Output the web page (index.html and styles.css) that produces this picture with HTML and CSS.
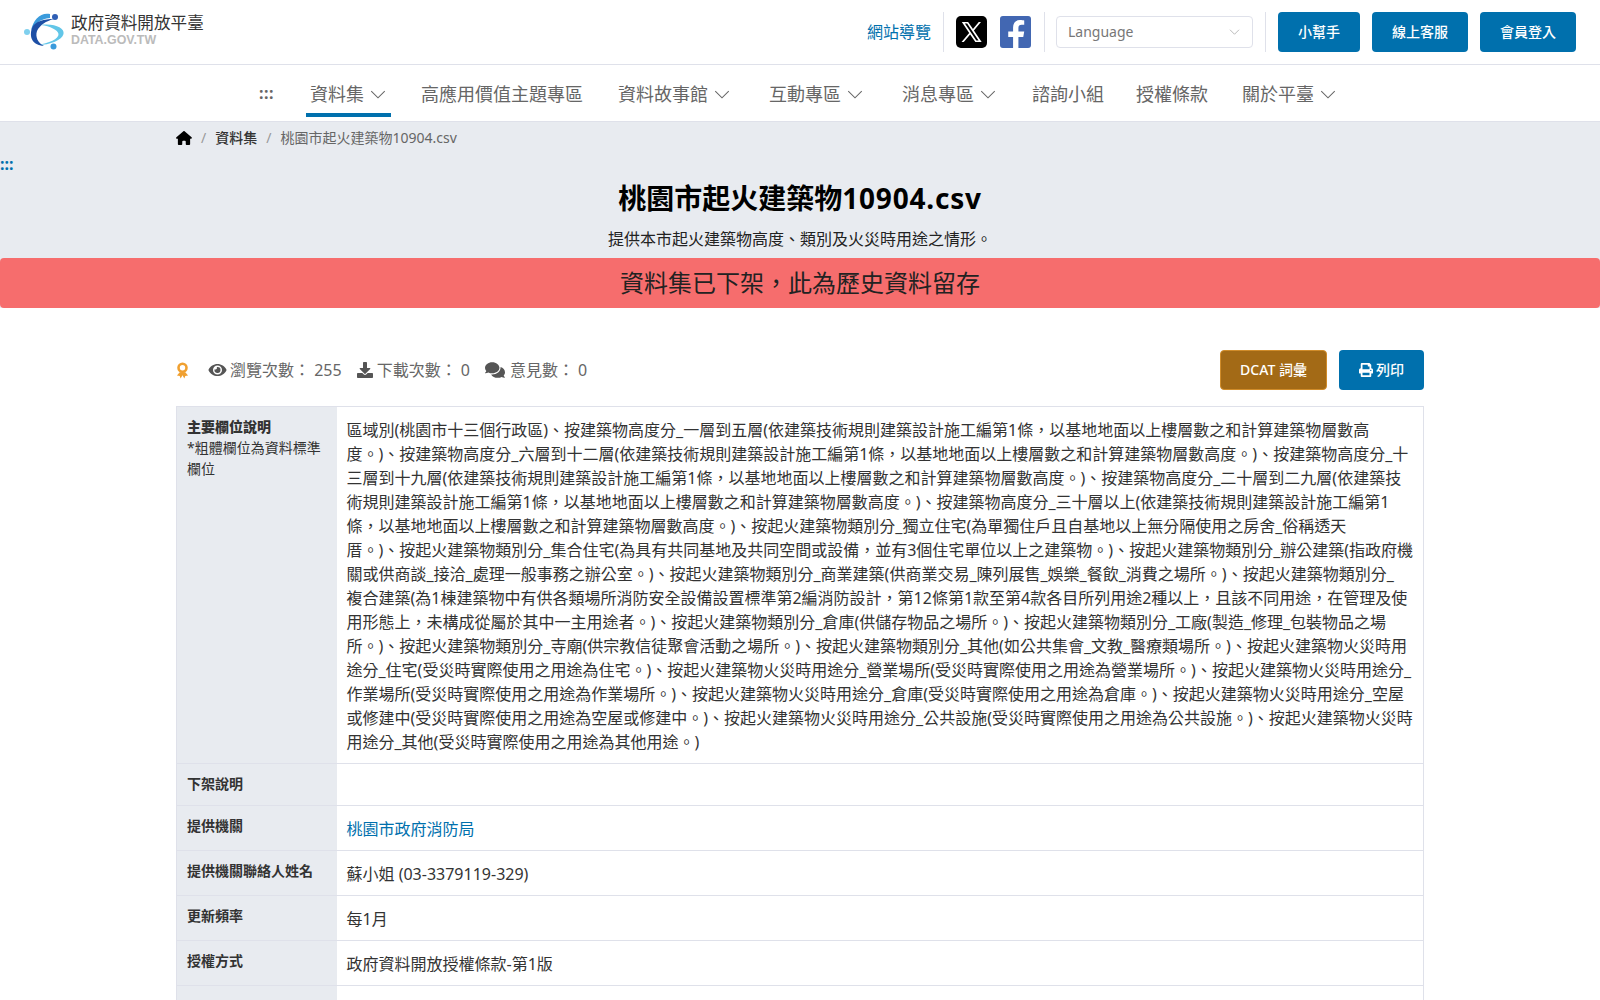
FILE: index.html
```html
<!DOCTYPE html>
<html lang="zh-Hant">

<head>
    <meta charset="UTF-8" />
    <meta name="viewport" content="width=device-width, initial-scale=1.0" />
    <title>桃園市起火建築物10904.csv</title>
    <link rel="stylesheet" href="styles.css">
</head>

<body>
    <!-- Top bar -->
    <header class="topbar">
        <a class="logo">
            <svg class="logo-mark" viewBox="24 12 44 40" aria-hidden="true">
                <path d="M41 25C54 23 65 28 63.500 34 62 40 51 45 37 45 49 43 59 39 58.500 34 58 30 50 26 41 25z" fill="#62c6e8" />
                <path d="M50 14C41 12 33 19 31 31 34 24 40 19 50 18z" fill="#3a9bdc" />
                <path d="M32 28C29 37 32 45 44 46 38 43 35 37 37 31 40 25 46 21 54 19 44 19 35 21 32 28z" fill="#1d4fa5" />
                <circle cx="55" cy="17" r="3" fill="#2f5fb5" />
                <circle cx="27" cy="32" r="3" fill="#7fd0ee" />
                <circle cx="53.500" cy="46.500" r="3" fill="#3a9bdc" />
            </svg>
            <span class="logo-text">
                <span class="logo-name">政府資料開放平臺</span>
                <span class="logo-url">DATA.GOV.TW</span>
            </span>
        </a>
        <div class="topbar-right">
            <a class="sitemap">網站導覽</a>
            <div class="social">
                <svg class="social-icon" viewBox="0 0 32 32" preserveAspectRatio="none" aria-label="X">
                    <rect width="32" height="32" rx="5" fill="#000" />
                    <path d="M6 6h6.500l5 7 6-7h2.300l-7.300 8.400L26.500 26H20l-5.400-7.600L8 26H5.700l7.900-9.100zm3.200 1.600L21 24.400h2.300L11.500 7.600z" fill="#fff" />
                </svg>
                <svg class="social-icon" viewBox="0 0 32 32" preserveAspectRatio="none" aria-label="Facebook">
                    <rect width="32" height="32" rx="3" fill="#4267b2" />
                    <path d="M19 32V21h5l1-5.500h-6V12c0-2 1-3.200 3.400-3.200H25V4.500C24 4.300 22.500 4 20.500 4 16 4 13.500 7 13.500 11.500v4h-5V21h5v11z" fill="#fff" />
                </svg>
            </div>
            <div class="lang-wrap">
                <div class="lang-select">
                    <span>Language</span>
                    <svg class="chevron chevron-sm" viewBox="0 0 14 8"><path d="M1 1l6 6 6-6" /></svg>
                </div>
            </div>
            <div class="top-buttons">
                <a class="btn btn-help">小幫手</a>
                <a class="btn">線上客服</a>
                <a class="btn">會員登入</a>
            </div>
        </div>
    </header>

    <!-- Main nav -->
    <nav class="mainnav">
        <a class="nav-anchor">:::</a>
        <a class="nav-item active">資料集<svg class="chevron" viewBox="0 0 14 8"><path d="M1 1l6 6 6-6" /></svg></a>
        <a class="nav-item">高應用價值主題專區</a>
        <a class="nav-item">資料故事館<svg class="chevron" viewBox="0 0 14 8"><path d="M1 1l6 6 6-6" /></svg></a>
        <a class="nav-item">互動專區<svg class="chevron" viewBox="0 0 14 8"><path d="M1 1l6 6 6-6" /></svg></a>
        <a class="nav-item">消息專區<svg class="chevron" viewBox="0 0 14 8"><path d="M1 1l6 6 6-6" /></svg></a>
        <a class="nav-item">諮詢小組</a>
        <a class="nav-item">授權條款</a>
        <a class="nav-item">關於平臺<svg class="chevron" viewBox="0 0 14 8"><path d="M1 1l6 6 6-6" /></svg></a>
    </nav>

    <!-- Page heading -->
    <section class="page-head">
        <div class="breadcrumb">
            <svg class="home-icon" viewBox="0 0 576 512"><path d="M575.800 255.500c0 18-15 32.100-32 32.100h-32l.7 160.200c0 2.700-.2 5.400-.5 8.100V472c0 22.100-17.900 40-40 40H456c-1.100 0-2.200 0-3.300-.1-1.400.1-2.800.1-4.200.1H392c-22.100 0-40-17.900-40-40v-88c0-17.700-14.300-32-32-32h-64c-17.700 0-32 14.300-32 32v88c0 22.100-17.900 40-40 40h-55.900c-1.500 0-3-.1-4.500-.2-1.200.1-2.400.2-3.600.2H104c-22.100 0-40-17.900-40-40V360c0-.9 0-1.900.1-2.800v-69.600H32c-18 0-32-14-32-32.100 0-9 3-17 10-24L266.400 8c7-7 15-8 22-8s15 2 21 7l255.400 224.500c8 7 12 15 11 24z" /></svg>
            <span class="crumb-sep">/</span>
            <a class="crumb-link">資料集</a>
            <span class="crumb-sep">/</span>
            <span class="crumb-current">桃園市起火建築物10904.csv</span>
        </div>
        <a class="content-anchor">:::</a>
        <h1>桃園市起火建築物<span class="title-ext">10904.csv</span></h1>
        <p class="lead">提供本市起火建築物高度、類別及火災時用途之情形。</p>
        <div class="offline-banner">資料集已下架，此為歷史資料留存</div>
    </section>

    <main class="container">
        <div class="stats-row">
            <div class="stats">
                <svg class="icon-award" viewBox="0 0 14 18">
                    <circle cx="7" cy="6" r="4.300" fill="none" stroke="#f0a030" stroke-width="2.800" />
                    <path d="M1 14.500l3 .5 1 2.500 2-3.500 2 3.500 1-2.500 3-.5-3-3.500H4z" fill="#f0a030" />
                </svg>
                <span class="stat">
                    <svg class="icon icon-eye" viewBox="0 0 576 512"><path d="M572.52 241.4C518.29 135.59 410.93 64 288 64S57.68 135.64 3.48 241.41a32.35 32.35 0 0 0 0 29.19C57.71 376.41 165.07 448 288 448s230.32-71.64 284.52-177.41a32.35 32.35 0 0 0 0-29.19zM288 400a144 144 0 1 1 144-144 143.93 143.93 0 0 1-144 144zm0-240a95.31 95.31 0 0 0-25.31 3.79 47.85 47.85 0 0 1-66.9 66.9A95.78 95.78 0 1 0 288 160z" /></svg>
                    <span>瀏覽次數： 255</span>
                </span>
                <span class="stat">
                    <svg class="icon" viewBox="0 0 512 512"><path d="M216 0h80c13.300 0 24 10.700 24 24v168h87.700c17.800 0 26.700 21.500 14.100 34.100L269.700 378.300c-7.500 7.500-19.800 7.500-27.300 0L90.100 226.100c-12.600-12.600-3.700-34.100 14.100-34.100H192V24c0-13.300 10.700-24 24-24zm296 376v112c0 13.300-10.700 24-24 24H24c-13.300 0-24-10.700-24-24V376c0-13.300 10.700-24 24-24h146.700l49 49c20.100 20.100 52.500 20.100 72.600 0l49-49H488c13.300 0 24 10.700 24 24z" /></svg>
                    <span>下載次數： 0</span>
                </span>
                <span class="stat">
                    <svg class="icon icon-comments" viewBox="0 0 576 512"><path d="M416 192c0-88.400-93.100-160-208-160S0 103.600 0 192c0 34.300 14.100 65.900 38 92-13.400 30.200-35.500 54.200-35.800 54.500-2.200 2.300-2.800 5.700-1.500 8.700S4.800 352 8 352c36.600 0 66.900-12.300 88.700-25 32.200 15.700 70.300 25 111.300 25 114.900 0 208-71.600 208-160zm122 220c23.900-26 38-57.700 38-92 0-66.900-53.500-124.200-129.300-148.100.9 6.600 1.300 13.300 1.300 20.100 0 105.900-107.700 192-240 192-10.800 0-21.300-.8-31.700-1.900C207.800 439.600 281.800 480 368 480c41 0 79.100-9.200 111.300-25 21.800 12.700 52.100 25 88.700 25 3.200 0 6.100-1.900 7.300-4.800 1.300-2.900.7-6.300-1.500-8.700-.3-.3-22.400-24.200-35.800-54.500z" /></svg>
                    <span>意見數： 0</span>
                </span>
            </div>
            <div class="actions">
                <a class="btn btn-dcat">DCAT 詞彙</a>
                <a class="btn btn-print">
                    <svg class="icon-print" viewBox="0 0 512 512"><path d="M448 192V77.250c0-8.490-3.370-16.620-9.370-22.630L393.370 9.370c-6-6-14.140-9.370-22.630-9.370H96C78.330 0 64 14.330 64 32v160c-35.350 0-64 28.650-64 64v112c0 8.840 7.160 16 16 16h48v96c0 17.670 14.330 32 32 32h320c17.670 0 32-14.330 32-32v-96h48c8.840 0 16-7.160 16-16V256c0-35.350-28.650-64-64-64zm-64 256H128v-96h256v96zm0-224H128V64h192v48c0 8.840 7.160 16 16 16h48v96zm48 72c-13.250 0-24-10.750-24-24 0-13.260 10.750-24 24-24s24 10.740 24 24c0 13.250-10.750 24-24 24z" /></svg>列印
                </a>
            </div>
        </div>

        <table class="detail-table">
            <tr>
                <th><strong>主要欄位說明</strong><span class="th-note">*粗體欄位為資料標準欄位</span></th>
                <td>區域別(桃園市十三個行政區)、按建築物高度分_一層到五層(依建築技術規則建築設計施工編第1條，以基地地面以上樓層數之和計算建築物層數高度。)、按建築物高度分_六層到十二層(依建築技術規則建築設計施工編第1條，以基地地面以上樓層數之和計算建築物層數高度。)、按建築物高度分_十三層到十九層(依建築技術規則建築設計施工編第1條，以基地地面以上樓層數之和計算建築物層數高度。)、按建築物高度分_二十層到二九層(依建築技術規則建築設計施工編第1條，以基地地面以上樓層數之和計算建築物層數高度。)、按建築物高度分_三十層以上(依建築技術規則建築設計施工編第1條，以基地地面以上樓層數之和計算建築物層數高度。)、按起火建築物類別分_獨立住宅(為單獨住戶且自基地以上無分隔使用之房舍_俗稱透天<br>厝。)、按起火建築物類別分_集合住宅(為具有共同基地及共同空間或設備，並有3個住宅單位以上之建築物。)、按起火建築物類別分_辦公建築(指政府機<br>關或供商談_接洽_處理一般事務之辦公室。)、按起火建築物類別分_商業建築(供商業交易_陳列展售_娛樂_餐飲_消費之場所。)、按起火建築物類別分_<br>複合建築(為1棟建築物中有供各類場所消防安全設備設置標準第2編消防設計，第12條第1款至第4款各目所列用途2種以上，且該不同用途，在管理及使用形態上，未構成從屬於其中一主用途者。)、按起火建築物類別分_倉庫(供儲存物品之場所。)、按起火建築物類別分_工廠(製造_修理_包裝物品之場所。)、按起火建築物類別分_寺廟(供宗教信徒聚會活動之場所。)、按起火建築物類別分_其他(如公共集會_文教_醫療類場所。)、按起火建築物火災時用途分_住宅(受災時實際使用之用途為住宅。)、按起火建築物火災時用途分_營業場所(受災時實際使用之用途為營業場所。)、按起火建築物火災時用途分_作業場所(受災時實際使用之用途為作業場所。)、按起火建築物火災時用途分_倉庫(受災時實際使用之用途為倉庫。)、按起火建築物火災時用途分_空屋或修建中(受災時實際使用之用途為空屋或修建中。)、按起火建築物火災時用途分_公共設施(受災時實際使用之用途為公共設施。)、按起火建築物火災時用途分_其他(受災時實際使用之用途為其他用途。)</td>
            </tr>
            <tr>
                <th>下架說明</th>
                <td></td>
            </tr>
            <tr>
                <th>提供機關</th>
                <td><a class="link">桃園市政府消防局</a></td>
            </tr>
            <tr>
                <th>提供機關聯絡人姓名</th>
                <td>蘇小姐 (03-3379119-329)</td>
            </tr>
            <tr>
                <th>更新頻率</th>
                <td>每1月</td>
            </tr>
            <tr>
                <th>授權方式</th>
                <td>政府資料開放授權條款-第1版</td>
            </tr>
            <tr>
                <th>&nbsp;</th>
                <td>&nbsp;</td>
            </tr>
        </table>
    </main>
</body>

</html>
```

FILE: styles.css
```css
:root {
    --blue: #0070ad;
    --line: #dfe1ea;
    --panel: #e8ebf0;
    --text: #333;
    --muted: #666;
}

* {
    box-sizing: border-box;
}

body {
    margin: 0;
    font-family: "Noto Sans", "Noto Sans CJK TC", sans-serif;
    font-size: 16px;
    line-height: 24px;
    color: var(--text);
    background: #fff;
}

/* Top bar */
.topbar {
    height: 65px;
    padding: 12px 24px;
    display: flex;
    justify-content: space-between;
    border-bottom: 1px solid var(--line);
}

.logo {
    display: flex;
    align-items: flex-start;
    gap: 3px;
}

.logo-mark {
    width: 44px;
    height: 40px;
}

.logo-text {
    display: flex;
    flex-direction: column;
}

.logo-name {
    font-size: 16.6px;
    line-height: 22px;
    color: #333;
}

.logo-url {
    font-family: "Liberation Sans", sans-serif;
    font-size: 12.4px;
    font-weight: bold;
    line-height: 13px;
    color: #bbb;
}

.topbar-right {
    display: flex;
    align-items: stretch;
}

.sitemap {
    color: var(--blue);
    line-height: 40px;
    padding-right: 12px;
    border-right: 1px solid var(--line);
}

.social {
    display: flex;
    align-items: center;
    gap: 13px;
    padding: 0 13px 0 12px;
    border-right: 1px solid var(--line);
}

.social-icon {
    width: 31px;
    height: 32px;
}

.lang-wrap {
    display: flex;
    align-items: center;
    padding: 0 12px 0 11px;
    border-right: 1px solid var(--line);
}

.lang-select {
    width: 197px;
    height: 32px;
    padding: 0 12px 0 11px;
    display: flex;
    align-items: center;
    justify-content: space-between;
    font-size: 14px;
    color: #777;
    border: 1px solid var(--line);
    border-radius: 4px;
}

.top-buttons {
    display: flex;
    gap: 12px;
    margin-left: 12px;
}

.btn {
    display: flex;
    align-items: center;
    justify-content: center;
    height: 40px;
    width: 96px;
    font-size: 14px;
    font-weight: 500;
    color: #fff;
    background: var(--blue);
    border-radius: 4px;
}

.btn-help {
    width: 82px;
}

.chevron {
    width: 16px;
    height: 9px;
    fill: none;
    stroke: #666;
    stroke-width: 0.9;
}

.chevron-sm {
    width: 11px;
    height: 6px;
    stroke: #999;
}

/* Main nav */
.mainnav {
    height: 57px;
    display: flex;
    align-items: stretch;
    padding-left: 259px;
    border-bottom: 1px solid var(--line);
}

.nav-anchor {
    width: 47px;
    padding-top: 16px;
    font-weight: 700;
    letter-spacing: 0.5px;
    color: #666;
}

.nav-item {
    display: flex;
    align-items: flex-start;
    padding: 16px 4px 0;
    font-size: 18px;
    line-height: 26px;
    color: #666;
    white-space: nowrap;
}

.nav-item .chevron {
    margin: 9px 0 0 6px;
}

.nav-item.active {
    border-bottom: 4px solid var(--blue);
    height: 52px;
    padding-right: 5px;
    margin-right: 26px;
}

.nav-item:nth-child(3) {
    margin-right: 27px;
}

.nav-item:nth-child(4),
.nav-item:nth-child(5) {
    margin-right: 31px;
}

.nav-item:nth-child(6) {
    margin-right: 28px;
}

.nav-item:nth-child(7) {
    margin-right: 24px;
}

.nav-item:nth-child(8) {
    margin-right: 26px;
}

/* Page heading */
.page-head {
    background: var(--panel);
    height: 186px;
}

.breadcrumb {
    display: flex;
    align-items: center;
    gap: 9px;
    margin-left: 176px;
    padding-top: 4px;
    font-size: 14px;
    line-height: 24px;
}

.home-icon {
    width: 16px;
    height: 14px;
    fill: #000;
}

.crumb-sep {
    color: #999;
}

.crumb-link {
    font-weight: 500;
}

.crumb-current {
    color: var(--muted);
}

.content-anchor {
    display: block;
    height: 24px;
    margin-top: 2px;
    line-height: 24px;
    font-weight: 700;
    color: var(--blue);
}

h1 {
    margin: 2px 0 0;
    text-align: center;
    font-size: 28px;
    line-height: 40px;
    font-weight: 700;
    color: #000;
}

.title-ext {
    letter-spacing: 0.8px;
}

.lead {
    margin: 9px 0 0;
    text-align: center;
    font-size: 16px;
    line-height: 24px;
    color: #222;
}

.offline-banner {
    margin-top: 7px;
    height: 50px;
    text-align: center;
    font-size: 24px;
    line-height: 50px;
    color: #222;
    background: #f66d6d;
    border-radius: 4px;
}

/* Content */
.container {
    width: 1248px;
    margin: 0 auto;
}

.stats-row {
    margin-top: 42px;
    height: 56px;
    display: flex;
    justify-content: space-between;
    align-items: flex-start;
}

.stats {
    display: flex;
    align-items: center;
    height: 40px;
    color: var(--muted);
}

.icon-award {
    width: 13px;
    height: 17px;
    margin-right: 19px;
}

.stat {
    display: flex;
    align-items: center;
    gap: 4px;
    margin-right: 15px;
    white-space: nowrap;
}

.icon {
    width: 16px;
    height: 16px;
    fill: #555;
}

.icon-eye {
    width: 19px;
    margin-right: -1px;
}

.icon-comments {
    width: 20px;
    height: 18px;
    margin-right: 1px;
}

.actions {
    display: flex;
    gap: 12px;
}

.btn-dcat {
    width: 107px;
    background: #a36a16;
    border: 1px solid #d08c2a;
}

.btn-print {
    width: 85px;
    gap: 3px;
}

.icon-print {
    width: 14px;
    height: 14px;
    fill: #fff;
}

.detail-table {
    width: 100%;
    table-layout: fixed;
    border-collapse: collapse;
    border: 1px solid var(--line);
}

.detail-table th,
.detail-table td {
    text-align: left;
    vertical-align: top;
    border-bottom: 1px solid var(--line);
}

.detail-table td {
    padding: 11px 8px 9px 10px;
}

.detail-table th {
    width: 160px;
    padding: 9px 10px 11px;
    font-size: 14px;
    line-height: 21px;
    font-weight: 700;
    background: var(--panel);
}

.th-note {
    display: block;
    font-weight: 400;
}

.link {
    color: var(--blue);
}
```
